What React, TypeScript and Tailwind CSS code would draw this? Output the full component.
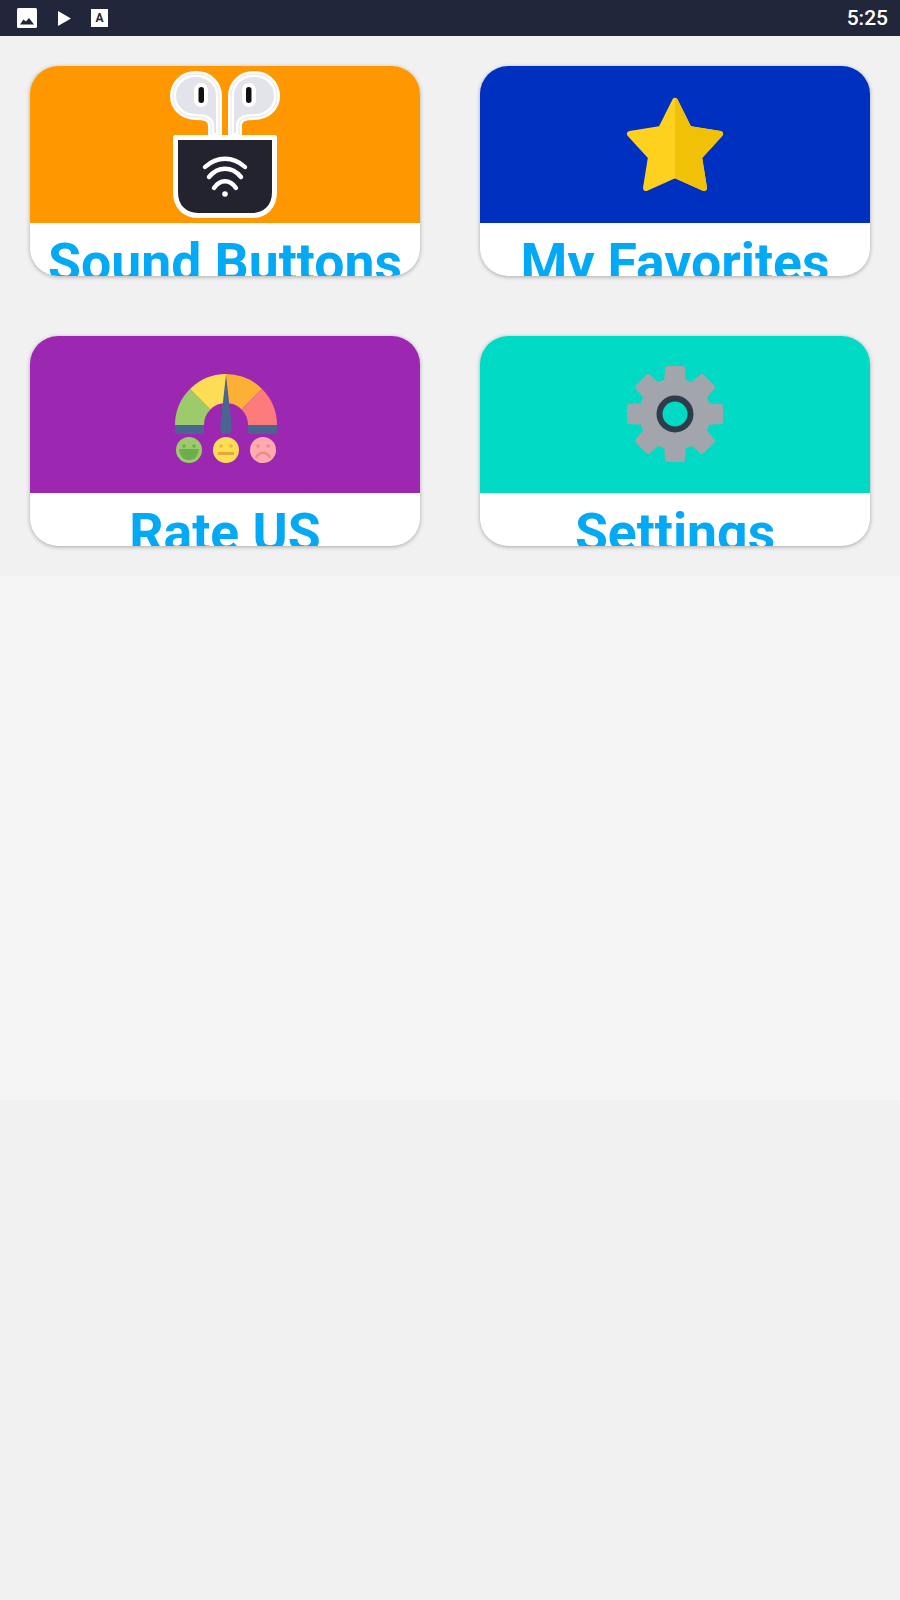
const Earbud = ({ flip }: { flip?: boolean }) => {
  const d = "M196 74 C182 74 173 84 173 96 C173 108 183 117 196 117 C204 117 211 118 211 126 L211 136 L219 136 L219 96 C219 84 210 74 196 74 Z";
  return (
    <g transform={flip ? "matrix(-1 0 0 1 450 0)" : undefined}>
      <path d={d} fill="#e3e3eb" stroke="#ffffff" strokeWidth="6" strokeLinejoin="round" />
      <path d={d} fill="none" stroke="#cfcaca" strokeWidth="0.5" />
      <rect x="194" y="83" width="14" height="24" rx="7" fill="#ffffff" />
      <rect x="198.5" y="87" width="5.5" height="16" rx="2.75" fill="#111111" />
    </g>
  );
};

const PodsIcon = () => (
  <svg width="120" height="157" viewBox="165 66 120 157">
    <Earbud />
    <Earbud flip />
    <path
      d="M175.5 137.5 H274.5 V192 C274.5 207 265 215.5 252 215.5 H198 C185 215.5 175.5 207 175.5 192 Z"
      fill="#23232f"
      stroke="#ffffff"
      strokeWidth="5"
      strokeLinejoin="round"
    />
    <g fill="none" stroke="#ffffff" strokeWidth="4.4" strokeLinecap="round">
      <path d="M205 167 C217 156 233 156 245 167" />
      <path d="M209 177 C218 166 232 166 241 177" />
      <path d="M214 188 C220 179 230 179 236 188" />
    </g>
    <circle cx="225" cy="194" r="2.8" fill="#ffffff" />
  </svg>
);

const starPath = "M675 101 L689 129 L720 134 L699 157 L704 188 L675 175 L646 188 L651 157 L630 134 L661 129 Z";

const StarIcon = () => (
  <svg width="100" height="157" viewBox="625 66 100 157">
    <clipPath id="star-right">
      <rect x="675" y="90" width="55" height="110" />
    </clipPath>
    <path d={starPath} fill="#ffd11f" stroke="#ffd11f" strokeWidth="6" strokeLinejoin="round" />
    <path
      d={starPath}
      fill="#f1c108"
      stroke="#f1c108"
      strokeWidth="6"
      strokeLinejoin="round"
      clipPath="url(#star-right)"
    />
  </svg>
);

const GaugeIcon = () => (
  <svg width="110" height="157" viewBox="170 336 110 157">
    <path d="M175 425 A51 51 0 0 1 190 389 L210.4 409.4 A22 22 0 0 0 204 425 Z" fill="#9dcb6b" />
    <path d="M190 389 A51 51 0 0 1 226 374 L226 403 A22 22 0 0 0 210.4 409.4 Z" fill="#fddd55" />
    <path d="M226 374 A51 51 0 0 1 262 389 L241.6 409.4 A22 22 0 0 0 226 403 Z" fill="#fdb035" />
    <path d="M262 389 A51 51 0 0 1 277 425 L248 425 A22 22 0 0 0 241.6 409.4 Z" fill="#fd7b7b" />
    <rect x="175" y="425" width="29" height="9" fill="#4a6591" />
    <rect x="248" y="425" width="29" height="9" fill="#4a6591" />
    <path d="M226 375 L232 428 L230 434 H222 L220 428 Z" fill="#4a6591" />
    <circle cx="189" cy="450" r="13" fill="#9dcb6b" />
    <circle cx="184" cy="446" r="1.8" fill="#6dae4c" />
    <circle cx="194" cy="446" r="1.8" fill="#6dae4c" />
    <path d="M179 449 H199 C198 458 193 460 189 460 C185 460 180 458 179 449 Z" fill="#6dae4c" />
    <circle cx="226" cy="450" r="13" fill="#fddd55" />
    <circle cx="221" cy="446" r="1.8" fill="#e5b93a" />
    <circle cx="231" cy="446" r="1.8" fill="#e5b93a" />
    <rect x="218" y="452" width="16" height="3" fill="#e0a93a" />
    <circle cx="263" cy="450" r="13" fill="#ffabb0" />
    <circle cx="258" cy="446" r="1.8" fill="#ee8a8f" />
    <circle cx="268" cy="446" r="1.8" fill="#ee8a8f" />
    <path d="M256 458 C259 451 267 451 270 458" fill="none" stroke="#ee8a8f" strokeWidth="2.4" />
  </svg>
);

const GearIcon = () => (
  <svg width="100" height="157" viewBox="625 336 100 157">
    {[0, 45, 90, 135, 180, 225, 270, 315].map((a) => (
      <path
        key={a}
        d="M667 366 H683 Q685 366 685 368 L686 384 H664 L665 368 Q665 366 667 366 Z"
        fill="#a3a5ad"
        transform={`rotate(${a} 675 414)`}
      />
    ))}
    <circle cx="675" cy="414" r="36" fill="#a3a5ad" />
    <circle cx="675" cy="414" r="15.5" fill="#00dac4" stroke="#2f3d4a" strokeWidth="6" />
  </svg>
);

const MenuCard = ({ label, bg, children }: { label: string; bg: string; children: React.ReactNode }) => (
  <div className="h-[210px] overflow-hidden rounded-[28px] bg-white shadow-[0_1px_4px_rgba(0,0,0,0.3)]">
    <div className={`flex h-[157px] items-center justify-center ${bg}`}>{children}</div>
    <p className="mt-[11px] text-center font-['Roboto',sans-serif] text-[53.5px] leading-[58px] font-bold whitespace-nowrap text-[#03a9f4]">
      {label}
    </p>
  </div>
);

export default function App() {
  return (
    <div className="min-h-[1600px] bg-[#f1f1f1]">
      <div className="flex h-9 items-center justify-between bg-[#22263a] pr-3 pl-[17px] text-white">
        <div className="flex items-center">
          <svg width="20" height="20" viewBox="0 0 20 20">
            <rect width="20" height="20" rx="1.5" fill="#ffffff" />
            <path d="M3 16.5 L6.5 11.5 L9 13.5 L12 10 L17 16.5 Z" fill="#22263a" />
          </svg>
          <svg className="ml-[21px]" width="13" height="15" viewBox="0 0 13 15">
            <path d="M0 0 L13 7.5 L0 15 Z" fill="#ffffff" />
          </svg>
          <div className="ml-[20px] flex h-[18px] w-[17px] items-center justify-center bg-white font-['Roboto',sans-serif] text-[12px] font-bold text-[#22263a]">
            A
          </div>
        </div>
        <span className="pt-[2px] font-['Roboto',sans-serif] text-[21px] font-medium">5:25</span>
      </div>
      <div className="grid grid-cols-2 gap-[60px] p-[30px]">
        <MenuCard label="Sound Buttons" bg="bg-[#ff9800]">
          <PodsIcon />
        </MenuCard>
        <MenuCard label="My Favorites" bg="bg-[#0030bf]">
          <StarIcon />
        </MenuCard>
        <MenuCard label="Rate US" bg="bg-[#9c27b0]">
          <GaugeIcon />
        </MenuCard>
        <MenuCard label="Settings" bg="bg-[#00dac4]">
          <GearIcon />
        </MenuCard>
      </div>
      <div className="h-[524px] bg-[#f5f5f5]" />
    </div>
  );
}
